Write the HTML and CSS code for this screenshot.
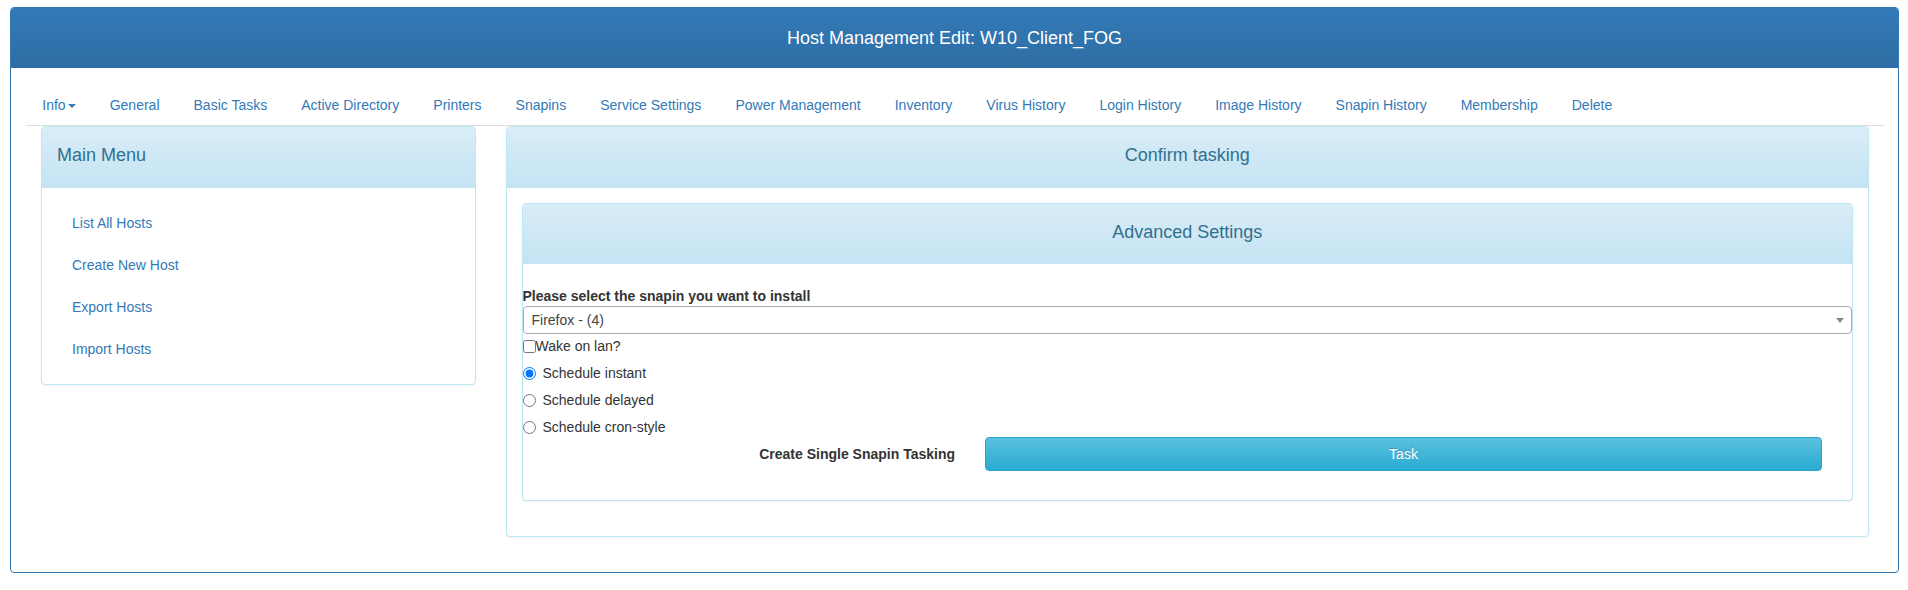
FILE: index.html
```html
<!DOCTYPE html>
<html lang="en">
<head>
<meta charset="utf-8">
<title>Host Management Edit: W10_Client_FOG</title>
<link rel="stylesheet" href="styles.css">
</head>
<body>
<div class="page">
  <div class="box">
    <div class="box-head">Host Management Edit: W10_Client_FOG</div>
    <div class="box-body">
      <ul class="tabs">
        <li class="first"><a href="#">Info<span class="caret"></span></a></li>
        <li><a href="#">General</a></li>
        <li><a href="#">Basic Tasks</a></li>
        <li><a href="#">Active Directory</a></li>
        <li><a href="#">Printers</a></li>
        <li><a href="#">Snapins</a></li>
        <li><a href="#">Service Settings</a></li>
        <li><a href="#">Power Management</a></li>
        <li><a href="#">Inventory</a></li>
        <li><a href="#">Virus History</a></li>
        <li><a href="#">Login History</a></li>
        <li><a href="#">Image History</a></li>
        <li><a href="#">Snapin History</a></li>
        <li><a href="#">Membership</a></li>
        <li><a href="#">Delete</a></li>
      </ul>
      <div class="row">
        <div class="col">
          <div class="panel">
            <div class="panel-heading left">Main Menu</div>
            <div class="panel-body">
              <ul class="menu">
                <li><a href="#">List All Hosts</a></li>
                <li><a href="#">Create New Host</a></li>
                <li><a href="#">Export Hosts</a></li>
                <li><a href="#">Import Hosts</a></li>
              </ul>
            </div>
          </div>
        </div>
        <div class="col">
          <div class="panel">
            <div class="panel-heading">Confirm tasking</div>
            <div class="panel-body">
              <div class="panel inner">
                <div class="panel-heading inner-heading">Advanced Settings</div>
                <div class="inner-body">
                  <label class="field-label">Please select the snapin you want to install</label>
                  <div class="select">
                    <span class="select-text">Firefox - (4)</span>
                    <span class="select-arrow"></span>
                  </div>
                  <label class="check"><input type="checkbox">Wake on lan?</label>
                  <label class="radio"><input type="radio" name="sched" checked>Schedule instant</label>
                  <label class="radio"><input type="radio" name="sched">Schedule delayed</label>
                  <label class="radio"><input type="radio" name="sched">Schedule cron-style</label>
                  <div class="task-row">
                    <div class="task-label">Create Single Snapin Tasking</div>
                    <div class="task-cell"><button class="btn-task" type="button">Task</button></div>
                  </div>
                </div>
              </div>
            </div>
          </div>
        </div>
      </div>
    </div>
  </div>
</div>
</body>
</html>
```

FILE: styles.css
```css
html, body {
  margin: 0;
  padding: 0;
  background: #fff;
}
body {
  font-family: "Liberation Sans", Arial, sans-serif;
  font-size: 14px;
  line-height: 20px;
  color: #333;
}
.page {
  padding: 7px 9px 0 10px;
}
.box {
  border: 1px solid #337ab7;
  border-radius: 4px;
  overflow: hidden;
}
.box-head {
  height: 60px;
  line-height: 60px;
  text-align: center;
  color: #fff;
  font-size: 18px;
  background: linear-gradient(to bottom, #337ab7 0%, #2e6da4 100%);
}
.box-body {
  padding: 17px 14px 15px 15px;
}
.tabs {
  display: flex;
  margin: 0;
  padding: 0;
  list-style: none;
  border-bottom: 1px solid #ddd;
}
.tabs li {
  margin-right: 2px;
}
.tabs a {
  display: block;
  padding: 10px 16.02px;
  line-height: 20px;
  color: #337ab7;
  text-decoration: none;
}
.tabs li.first a {
  padding-left: 16.3px;
}
.caret {
  display: inline-block;
  width: 0;
  height: 0;
  margin-left: 2px;
  vertical-align: middle;
  border-top: 4px solid #337ab7;
  border-left: 4px solid transparent;
  border-right: 4px solid transparent;
}
.row {
  display: grid;
  grid-template-columns: 1fr 3fr;
  align-items: start;
}
.col {
  padding: 0 15px;
}
.panel {
  background: #fff;
  border: 1px solid #bce8f1;
  border-radius: 4px;
  margin-bottom: 20px;
  box-shadow: 0 1px 2px rgba(0, 0, 0, 0.05);
  overflow: hidden;
}
.panel-heading {
  padding: 18px 15px 22px;
  font-size: 18px;
  line-height: 21px;
  color: #31708f;
  text-align: center;
  background: linear-gradient(to bottom, #d9edf7 0%, #c4e3f3 100%);
}
.panel-heading.left {
  text-align: left;
}
.panel-heading.inner-heading {
  padding-bottom: 21px;
}
.panel-body {
  padding: 15px;
}
.menu {
  margin: 0;
  padding: 0;
  list-style: none;
}
.menu li + li {
  margin-top: 2px;
}
.menu a {
  display: block;
  padding: 10px 15px;
  line-height: 20px;
  color: #337ab7;
  text-decoration: none;
}
.inner {
  margin-bottom: 20px;
}
.inner-body {
  padding: 22px 0 29px;
}
.field-label {
  display: block;
  font-weight: bold;
  line-height: 20px;
}
.select {
  position: relative;
  height: 28px;
  box-sizing: border-box;
  border: 1px solid #aaa;
  border-radius: 4px;
  padding-left: 8px;
  line-height: 26px;
  color: #444;
}
.select-arrow {
  position: absolute;
  right: 7px;
  top: 11px;
  width: 0;
  height: 0;
  border-top: 5px solid #888;
  border-left: 4px solid transparent;
  border-right: 4px solid transparent;
}
.check {
  display: flex;
  align-items: center;
  height: 20px;
  margin-top: 2px;
}
.check input {
  margin: 0;
  width: 13px;
  height: 13px;
}
.radio {
  display: flex;
  align-items: center;
  height: 20px;
  margin-top: 7px;
}
.radio input {
  margin: 0 7px 0 0;
  width: 13px;
  height: 13px;
}
.task-row {
  display: grid;
  grid-template-columns: 1fr 2fr;
  margin: 0 15px 0 14px;
}
.task-label {
  padding: 0 15px;
  text-align: right;
  font-weight: bold;
  line-height: 34px;
}
.task-cell {
  padding: 0 15px;
}
.btn-task {
  display: block;
  width: 100%;
  height: 34px;
  border: 1px solid #28a4c9;
  border-radius: 4px;
  background: linear-gradient(to bottom, #5bc0de 0%, #2aabd2 100%);
  color: #fff;
  font-family: "Liberation Sans", Arial, sans-serif;
  font-size: 14px;
  line-height: 20px;
  padding: 6px 12px;
  text-shadow: 0 -1px 0 rgba(0, 0, 0, 0.2);
}
```
